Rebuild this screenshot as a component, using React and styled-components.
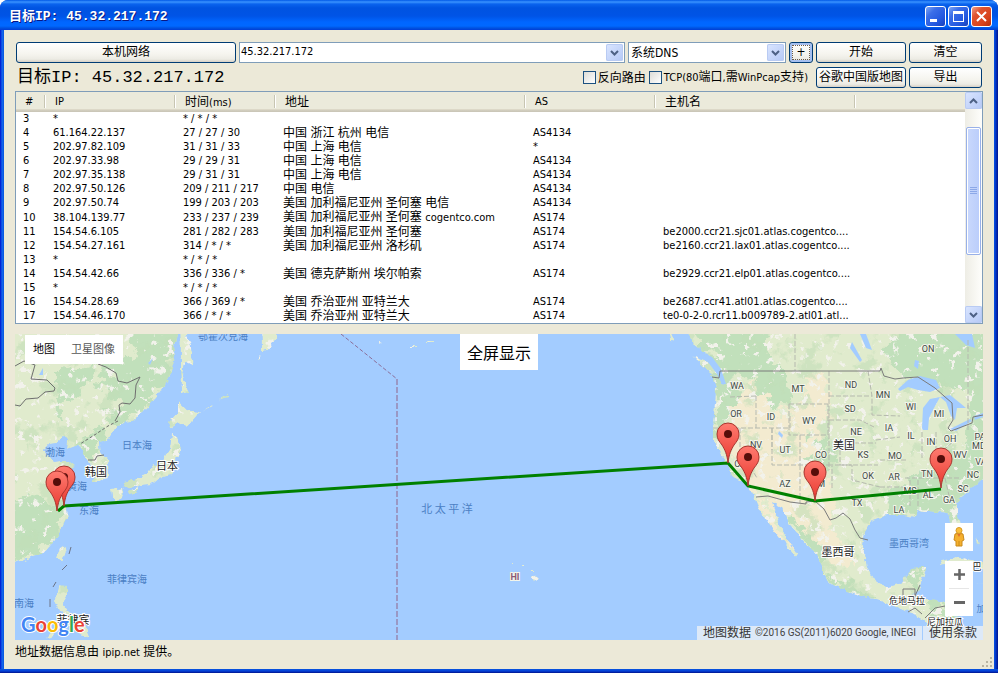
import React from "react";
import styled, { createGlobalStyle } from "styled-components";

const LATIN = '"DejaVu Sans Condensed", "Noto Sans", "Noto Sans CJK SC", sans-serif';
const MONO = '"Liberation Mono", "Noto Sans CJK SC", monospace';

const GlobalStyle = createGlobalStyle`
  * { box-sizing: border-box; }
  body { margin: 0; background: #fff; }
  button, input, select { font: inherit; color: inherit; margin: 0; }
`;

const Window = styled.div`
  display: flex;
  flex-direction: column;
  min-height: 100vh;
  border-radius: 8px 8px 0 0;
  background: linear-gradient(90deg, #0019cf 0, #0831d9 1px, #166aee 2px, #0855dd 4px, #0855dd calc(100% - 4px), #0441d8 calc(100% - 3px), #00138c 100%);
  color: #000;
  font: 11px/14px ${LATIN};
  overflow: hidden;
`;

const TitleBar = styled.header`
  display: flex;
  align-items: center;
  justify-content: space-between;
  height: 30px;
  padding: 3px 6px 0 9px;
  background: linear-gradient(180deg, #0058e6 0, #3a93ff 2px, #0a63ee 4px, #0053e1 8px, #0054e6 16px, #0066ff 22px, #0068ff 26px, #0053e0 28px, #003dd7 30px);
`;

const Title = styled.h1`
  margin: 0;
  color: #fff;
  font: bold 13px/20px ${MONO};
  text-shadow: 1px 1px 0 #0a1883;
  white-space: pre;
`;

const CaptionButtons = styled.div`
  display: flex;
  gap: 2px;
`;

const CaptionButton = styled.button`
  display: flex;
  width: 21px;
  height: 21px;
  padding: 0;
  border: 1px solid #fff;
  border-radius: 3px;
  background: ${(p) =>
    p.$danger
      ? "linear-gradient(135deg, #f0a08a 0, #e0532e 30%, #d8431c 70%, #b32d0a 100%)"
      : "linear-gradient(135deg, #7ea6f4 0, #3b6ee8 30%, #2358e0 70%, #1840b8 100%)"};
`;

const Client = styled.main`
  display: flex;
  flex: 1;
  flex-direction: column;
  margin: 0 4px;
  padding: 12px 11px 0;
  background: #ece9d8;
`;

const Toolbar = styled.form`
  display: grid;
  grid-template-columns: 220px 1fr 158px 24px 90px 73px;
  grid-auto-rows: 21px;
  gap: 4px 3px;
  padding: 0 1px;
`;

const XpButton = styled.button`
  padding: 0;
  border: 1px solid #003c74;
  border-radius: 3px;
  background: linear-gradient(180deg, #fff 0, #f5f4ee 60%, #ecebe4 85%, #d6d0c5 100%);
  box-shadow: ${(p) => (p.$focused ? "inset 0 0 0 2px #a6c0f0" : "none")};
  outline: ${(p) => (p.$focused ? "1px dotted #6b5a4a" : "none")};
  outline-offset: -4px;
  font-size: 12px;
  line-height: 17px;
  white-space: nowrap;
`;

const Combo = styled.div`
  display: grid;
  grid-template-columns: 1fr 17px;
  padding: 1px;
  border: 1px solid #7f9db9;
  background: #fff;
`;

const ComboInput = styled.input`
  min-width: 0;
  padding: 0 0 1px;
  border: 0;
  outline: 0;
  background: transparent;
`;

const ComboSelect = styled.select`
  grid-area: 1 / 1 / 2 / 3;
  padding: 0 0 0 1px;
  border: 0;
  outline: 0;
  background: transparent;
  appearance: none;
  font-size: 12px;
`;

const ArrowFace = styled.span`
  display: flex;
  align-items: center;
  justify-content: center;
  grid-area: 1 / 2;
  border-radius: 2px;
  background: linear-gradient(135deg, #dbe6ff, #b4c8f6);
  box-shadow: inset 0 0 0 1px #b9cbf3;
  pointer-events: none;
`;

const ArrowButton = styled.button`
  display: flex;
  align-items: center;
  justify-content: center;
  padding: 0;
  border: 0;
  border-radius: 2px;
  background: linear-gradient(135deg, #dbe6ff, #b4c8f6);
  box-shadow: inset 0 0 0 1px #b9cbf3;
`;

const Summary = styled.div`
  display: flex;
  grid-column: span 4;
  align-items: center;
  justify-content: space-between;
  padding: 0 5px 0 1px;
`;

const Target = styled.h2`
  margin: 0;
  font: 17px/21px ${MONO};
  white-space: pre;
`;

const Options = styled.div`
  display: flex;
  gap: 3px;
`;

const Option = styled.label`
  display: flex;
  align-items: center;
  gap: 2px;
  font-size: 12px;
  white-space: nowrap;
`;

const Tick = styled.input`
  width: 13px;
  height: 13px;
  border: 1px solid #1c5180;
  background: linear-gradient(135deg, #dcdcd7, #fff);
  appearance: none;
`;

const Small = styled.span`
  font-size: 11px;
`;

const ListBox = styled.section`
  display: grid;
  grid-template-columns: 1fr 17px;
  margin-top: 3px;
  border: 1px solid #7f9db9;
  background: #fff;
`;

const Hops = styled.table`
  width: 100%;
  border-collapse: collapse;
  table-layout: fixed;
`;

const Head = styled.th`
  width: ${(p) => (p.$width ? `${p.$width}px` : "auto")};
  height: 20px;
  padding: 0 0 0 ${(p) => (p.$width ? 9 : 0)}px;
  background:
    linear-gradient(90deg, #c7c5b2 1px, #fff 1px) right 0 top 3px / ${(p) => (p.$width ? 2 : 0)}px 13px no-repeat,
    linear-gradient(180deg, #ebeadb 0, #ebeadb 17px, #e2decd 17px, #d6d2c2 18px, #cbc7b8 19px, #cbc7b8 20px);
  font-size: ${(p) => (p.$cjk ? 12 : 11)}px;
  font-weight: normal;
  text-align: left;
  white-space: nowrap;
`;

const Cell = styled.td`
  height: 14px;
  padding: 0 0 0 7px;
  font-size: ${(p) => (p.$cjk ? 12 : 11)}px;
  line-height: 14px;
  overflow: hidden;
  text-overflow: ellipsis;
  white-space: nowrap;
`;

const Scrollbar = styled.div`
  display: grid;
  grid-template-rows: 17px 1fr 17px;
  background: linear-gradient(90deg, #eeede5, #fefefb);
`;

const ScrollTrack = styled.div`
  display: grid;
  grid-template-rows: 18fr 127fr 51fr;
`;

const ScrollThumb = styled.div`
  display: flex;
  grid-row: 2;
  flex-direction: column;
  align-items: center;
  justify-content: center;
  gap: 1px;
  margin: 0 1px;
  border: 1px solid #98b0e8;
  border-radius: 2px;
  background: linear-gradient(90deg, #c9d8fc, #bacdfb);
  box-shadow: inset 0 0 0 1px #fff;
`;

const Grip = styled.span`
  width: 7px;
  height: 1px;
  background: #8ca8e8;
`;

const MapPanel = styled.section`
  position: relative;
  flex: 1;
  min-height: 306px;
  margin-top: 10px;
  overflow: hidden;
  background: #a3ccff;
`;

const MapSvg = styled.svg`
  position: absolute;
  inset: 0;
  display: block;
  width: 100%;
  height: 100%;
`;

const StateText = styled.text`
  fill: ${(p) => (p.$tint ? "#8a5a78" : "#3f4a45")};
  stroke: #f3f5ea;
  stroke-width: 2px;
  paint-order: stroke;
  font: 9px Roboto, sans-serif;
  font-weight: ${(p) => (p.$tint ? 700 : 400)};
  text-anchor: middle;
`;

const CountryText = styled.text`
  fill: #222;
  stroke: #fff;
  stroke-width: 2px;
  paint-order: stroke;
  font: ${(p) => p.$size || 11}px "Noto Sans CJK SC", sans-serif;
  text-anchor: middle;
`;

const SeaText = styled.text`
  fill: #4b80c4;
  font: ${(p) => p.$size || 10}px "Noto Sans CJK SC", sans-serif;
  text-anchor: middle;
`;

const LogoText = styled.text`
  stroke: #fff;
  stroke-width: 2px;
  paint-order: stroke;
  font: bold 20px Lato, sans-serif;
`;

const MapTypes = styled.div`
  position: absolute;
  top: 1px;
  left: 10px;
  display: flex;
  background: #fff;
`;

const MapType = styled.button`
  height: 29px;
  padding: 0 8px;
  border: 0;
  background: transparent;
  color: ${(p) => (p.$active ? "#000" : "#565656")};
  font-size: 11px;
`;

const FullScreen = styled.button`
  position: absolute;
  top: 0;
  left: 50%;
  width: 78px;
  height: 36px;
  margin-left: -39px;
  padding: 0;
  border: 0;
  background: #fff;
  font: 16px "Noto Sans CJK SC", sans-serif;
`;

const MapControls = styled.div`
  position: absolute;
  right: 10px;
  bottom: 24px;
  display: flex;
  flex-direction: column;
  gap: 10px;
`;

const ControlGroup = styled.div`
  display: flex;
  flex-direction: column;
  align-items: center;
  width: 28px;
  background: #fff;
`;

const ControlButton = styled.button`
  display: flex;
  align-items: center;
  justify-content: center;
  width: 28px;
  height: ${(p) => p.$height}px;
  padding: 0;
  border: 0;
  background: transparent;
`;

const ControlRule = styled.span`
  width: 20px;
  height: 1px;
  background: #e6e6e6;
`;

const Credits = styled.div`
  position: absolute;
  right: 0;
  bottom: 0;
  display: flex;
  gap: 1px;
  color: #444;
  font: 10px/14px Roboto, "Noto Sans CJK SC", sans-serif;
`;

const Credit = styled.span`
  display: flex;
  gap: 4px;
  padding: 0 6px;
  background: rgba(245, 245, 245, 0.7);
  white-space: nowrap;
`;

const CreditLabel = styled.span`
  color: #333;
  font-size: 12px;
`;

const TermsLink = styled.a`
  color: #333;
  font-size: 12px;
  text-decoration: none;
`;

const Footer = styled.footer`
  display: flex;
  justify-content: space-between;
  height: 29px;
  margin-right: -10px;
  padding-top: 5px;
  font-size: 12px;
`;

const SizeGrip = styled.svg`
  align-self: flex-end;
  margin-bottom: 1px;
`;

const BottomEdge = styled.div`
  height: 4px;
  background: linear-gradient(180deg, #0855dd, #0441d8 50%, #00138c);
`;

const hops = [
  ["3", "*", "* / * / *", "", "", "", ""],
  ["4", "61.164.22.137", "27 / 27 / 30", "中国 浙江 杭州 电信", "", "AS4134", ""],
  ["5", "202.97.82.109", "31 / 31 / 33", "中国 上海 电信", "", "*", ""],
  ["6", "202.97.33.98", "29 / 29 / 31", "中国 上海 电信", "", "AS4134", ""],
  ["7", "202.97.35.138", "29 / 31 / 31", "中国 上海 电信", "", "AS4134", ""],
  ["8", "202.97.50.126", "209 / 211 / 217", "中国 电信", "", "AS4134", ""],
  ["9", "202.97.50.74", "199 / 203 / 203", "美国 加利福尼亚州 圣何塞 电信", "", "AS4134", ""],
  ["10", "38.104.139.77", "233 / 237 / 239", "美国 加利福尼亚州 圣何塞 ", "cogentco.com", "AS174", ""],
  ["11", "154.54.6.105", "281 / 282 / 283", "美国 加利福尼亚州 圣何塞", "", "AS174", "be2000.ccr21.sjc01.atlas.cogentco...."],
  ["12", "154.54.27.161", "314 / * / *", "美国 加利福尼亚州 洛杉矶", "", "AS174", "be2160.ccr21.lax01.atlas.cogentco...."],
  ["13", "*", "* / * / *", "", "", "", ""],
  ["14", "154.54.42.66", "336 / 336 / *", "美国 德克萨斯州 埃尔帕索", "", "AS174", "be2929.ccr21.elp01.atlas.cogentco...."],
  ["15", "*", "* / * / *", "", "", "", ""],
  ["16", "154.54.28.69", "366 / 369 / *", "美国 乔治亚州 亚特兰大", "", "AS174", "be2687.ccr41.atl01.atlas.cogentco...."],
  ["17", "154.54.46.170", "366 / * / *", "美国 乔治亚州 亚特兰大", "", "AS174", "te0-0-2-0.rcr11.b009789-2.atl01.atl..."],
];

const states = [
  ["ON", 928, 352], ["WA", 737, 389], ["MT", 798, 392], ["ND", 851, 388], ["MN", 883, 398],
  ["OR", 736, 417], ["ID", 771, 420], ["SD", 850, 412], ["WY", 809, 424], ["WI", 911, 410],
  ["MI", 939, 417], ["NE", 856, 435], ["IA", 889, 431], ["IL", 911, 439], ["IN", 931, 445],
  ["OH", 950, 442], ["PA", 980, 440], ["MD", 979, 449], ["NV", 756, 448], ["UT", 785, 453],
  ["CO", 821, 458], ["KS", 863, 458], ["MO", 895, 459], ["WV", 960, 458], ["VA", 981, 465],
  ["CA", 740, 467], ["AZ", 785, 487], ["NM", 818, 487], ["OK", 868, 479], ["AR", 894, 480],
  ["TN", 927, 477], ["NC", 973, 478], ["MS", 910, 494], ["AL", 928, 498], ["SC", 963, 492],
  ["GA", 949, 503], ["TX", 857, 506], ["LA", 899, 513],
];

const countries = [
  ["韩国", 96, 476, 11], ["日本", 167, 470, 11], ["美国", 844, 449, 11], ["墨西哥", 838, 556, 11],
  ["危地马拉", 907, 604, 9], ["尼加拉瓜", 945, 625, 9], ["菲律宾", 73, 624, 11], ["巴", 977, 570, 9],
];

const seas = [
  ["日本海", 137, 449, 10], ["渤海", 55, 456, 10], ["黄海", 77, 490, 10], ["东海", 89, 514, 10],
  ["菲律宾海", 127, 583, 10], ["南海", 24, 607, 10], ["鄂霍次克海", 223, 340, 10],
  ["北 太 平 洋", 447, 513, 11], ["墨西哥湾", 909, 547, 10], ["加勒比", 990, 612, 9],
];

const pins = [[64, 506], [57, 511], [728, 463], [748, 486], [815, 501], [941, 488]];

const LAND = [
  "M5 324H177V334L173 347 175 357 170 375 160 392 147 408 133 422 125 423 117 425 107 440 99 442 100 452 108 460 109 475 100 482 93 482 94 468 87 460 83 453 79 445 67 450 68 438 63 437 58 442 50 443 43 450 50 458 53 463 60 462 70 462 75 466 66 470 60 478 63 490 65 502 66 507 67 518 60 532 50 545 42 555 30 558 15 563H5Z",
  "M180 324H187V334L190 347 193 366 185 362 183 378 189 392 182 394 181 368Z",
  "M178 401L187 410 200 412 193 420 187 427 177 422 172 430 169 423 178 413Z",
  "M172 433L177 437 182 448 177 458 175 468 172 475 160 478 153 484 143 485 133 487 123 488 125 483 140 477 147 474 153 465 158 466 166 455 170 446Z",
  "M112 490L122 488 124 495 117 502 113 498ZM127 491L138 488 135 494 128 495Z",
  "M64 544L66 552 62 563 57 556 60 547Z",
  "M58 585L68 586 68 595 63 603 67 610 74 616 70 618 60 610 55 600ZM72 622L80 618 86 628 90 638 80 634 74 630ZM46 638L58 625 59 627 49 640Z",
  "M262 324H277V334L275 340 268 350 263 352ZM256 361L260 356 261 358 258 361Z",
  "M202 412L212 405 213 406ZM217 401L228 395 228 397Z",
  "M687 324V334L692 343 702 350 707 354 712 362 720 370 725 385 722 384 719 376 712 375 716 388 713 428 713 438 720 453 728 465 733 477 743 482 752 492 757 505 768 522 780 538 790 550 796 558 798 555 790 542 780 527 775 512 772 503 782 508 790 525 807 545 815 552 822 567 822 575 833 585 863 597 880 600 897 607 910 613 923 620 933 628 940 650H962L958 625 952 606 937 600 917 598 913 594 920 588 927 567 910 568 903 583 887 587 877 583 867 567 863 548 865 532 873 520 887 515 903 515 915 517 917 510 937 512 947 513 952 527 958 538 962 532 957 512 957 502 965 495 983 477 993 470V324Z",
  "M692 356L707 362 718 374 716 377 707 370 697 361Z",
  "M668 324L672 334 675 341 671 340Z",
  "M940 561L957 557 973 560 993 566V570L965 564 957 563 941 566ZM976 583L993 582V587ZM977 535L979 545 976 541Z",
  "M534 574L537 577 539 579 534 582 532 577ZM531 570h2v1h-2zM521 566h2v1h-2zM513 563h1v1h-1z",
  "M408 346h9v1h-9zM427 342h8v1h-8zM380 343l3 1-3 1z",
].join("");

const WOODS = [
  "M125 324L172 324 173 347 170 372 150 405 120 423 108 420 118 405 110 395 95 388 98 374 122 365 138 352Z",
  "M60 370L95 360 86 380 72 402 55 420 58 395Z",
  "M5 510L30 490 50 500 67 510 60 530 42 553 5 560Z",
  "M77 440L100 425 107 438 98 444 100 454 90 462Z",
  "M690 324H762L775 365 792 378 788 405 772 412 760 395 750 378 742 374 736 388 731 400 728 425 724 450 716 440 713 428 716 388 712 375 720 372Z",
  "M812 436L826 434 832 455 826 470 815 464Z",
  "M900 324H993V477L958 505 960 534 950 520 945 512 878 518 888 496 905 486 925 470 945 460 965 445 972 405 958 388 910 380 890 366 888 345Z",
  "M796 513L812 530 824 555 822 572 808 545 792 525Z",
  "M905 570L926 568 918 590 903 584ZM924 602L945 602 958 625 935 618Z",
  "M822 575L860 588 882 598 860 597 832 585Z",
];

const TAN = [
  "M732 392L755 385 778 417 800 405 810 375 822 378 832 400 825 425 812 432 814 465 830 472 836 505 826 530 850 548 858 566 842 568 805 530 780 505 755 494 742 478 730 452 734 428 728 415Z",
  "M756 500L773 508 797 556 788 552 768 522Z",
];

const LAKES =
  "M898 389L908 380 920 376 936 380 940 388 930 392 918 390 908 387 900 391ZM922 428L923 408 930 399 940 397 934 408 929 418 928 430 923 430ZM940 397L950 395 960 403 966 408 957 408 955 420 951 416 946 402ZM950 429L970 419 972 421 956 431ZM974 416L983 413V417L975 420ZM860 334L866 334 872 350 866 348ZM852 342L862 360 860 362 850 348ZM955 334H972L975 348 966 345ZM915 360L919 361 918 369 914 366ZM702 352L712 357 721 369 726 384 722 384 717 374 708 362ZM779 431L783 435 782 438 778 434ZM148 363L153 358 150 365ZM39 375L43 368 43 375Z";

const BORDERS =
  "M720 371H880L881 368 884 376 895 379 903 378 918 377 935 388 944 396 952 403 953 420 948 428 951 431 972 423 973 417 983 415M712 377L719 378 720 371M756 497L768 496 790 502 806 504V502L815 501 824 509 830 520 836 518 843 513 850 519 855 530 860 538 868 540M903 596V589H915V600M915 596L920 585M925 618L935 608 945 606M908 612L915 608 922 614";

const ASIA_BORDERS =
  "M15 405L20 406 26 399 38 398 45 392 54 391 55 388 47 380 31 379 35 365 24 361 15 366M98 364L106 367 116 373 118 381 127 383 140 377 136 385 135 398 130 404 122 403 119 405 120 412 115 421M88 460L95 460 97 456 104 455";

const STATE_LINES =
  "M713 428H790V416M756 396V428M772 428V450M789 404H828M789 404V435H828V404M800 435V465M772 428V465H828M800 465V503M829 371V470M829 396H872M829 420H860L874 427M840 443H876M840 443V465H878M828 465H852V480L880 487M868 371L872 396 872 415 900 416M876 440L900 437M880 460H906M880 487H905M795 334V371M910 480V508M918 480V508M905 478H960M922 432V460M936 432V455M945 478L950 500M938 455L955 440M968 430V405M968 408V340M832 488V466M730 397L756 396M740 428V450L757 478";

function Chevron({ up }) {
  return (
    <svg width="9" height="6" viewBox="0 0 9 6" aria-hidden="true">
      <path d={up ? "M1 5L4.500 1.500 8 5" : "M1 1L4.500 4.500 8 1"} fill="none" stroke="#4d6185" strokeWidth="2" />
    </svg>
  );
}

function Pin({ x, y }) {
  return (
    <g transform={`translate(${x} ${y})`}>
      <path
        d="M0 0C-1 -9 -3 -13 -6 -18C-9 -22 -11 -24 -11 -29A11 11 0 0 1 11 -29C11 -24 9 -22 6 -18C3 -13 1 -9 0 0Z"
        fill="url(#pinFill)"
        stroke="#a8352f"
        strokeWidth="1"
      />
      <circle cx="0" cy="-29" r="4" fill="#560d0a" />
    </g>
  );
}

function RouteMap() {
  return (
    <MapSvg viewBox="15 334 968 306" preserveAspectRatio="xMidYMid slice" role="img" aria-label="路由地图">
      <defs>
        <linearGradient id="pinFill" x1="0" y1="0" x2="0" y2="1">
          <stop offset="0" stopColor="#ff7b70" />
          <stop offset="1" stopColor="#e8382f" />
        </linearGradient>
        <clipPath id="landClip"><path d={LAND} /></clipPath>
        <filter id="forest" x="0" y="0" width="1" height="1" colorInterpolationFilters="sRGB">
          <feTurbulence type="fractalNoise" baseFrequency="0.05" numOctaves="4" seed="7" />
          <feColorMatrix values="0 0 0 0 0.76  0 0 0 0 0.87  0 0 0 0 0.72  10 0 0 0 -5.800" />
        </filter>
        <filter id="peaks" x="0" y="0" width="1" height="1" colorInterpolationFilters="sRGB">
          <feTurbulence type="fractalNoise" baseFrequency="0.12" numOctaves="3" seed="21" />
          <feColorMatrix values="0 0 0 0 0.95  0 0 0 0 0.95  0 0 0 0 0.92  0 14 0 0 -8.800" />
        </filter>
        <filter id="coast" filterUnits="userSpaceOnUse" x="5" y="324" width="988" height="326">
          <feTurbulence type="fractalNoise" baseFrequency="0.15" numOctaves="2" seed="3" />
          <feDisplacementMap in="SourceGraphic" scale="6" xChannelSelector="R" yChannelSelector="G" />
        </filter>
        <filter id="patches" filterUnits="userSpaceOnUse" x="5" y="324" width="988" height="326">
          <feTurbulence type="fractalNoise" baseFrequency="0.07" numOctaves="3" seed="11" />
          <feDisplacementMap in="SourceGraphic" scale="30" xChannelSelector="R" yChannelSelector="G" />
        </filter>
      </defs>
      <rect x="15" y="334" width="968" height="306" fill="#a3ccff" />
      <g filter="url(#coast)">
        <g clipPath="url(#landClip)">
          <path d={LAND} fill="#e0ebcd" />
          <g filter="url(#patches)">
            {WOODS.map((d) => <path key={d} d={d} fill="#c1e0bb" />)}
            {TAN.map((d) => <path key={d} d={d} fill="#f3ebd0" />)}
          </g>
          <rect x="5" y="324" width="988" height="326" filter="url(#forest)" opacity="0.6" />
          <rect x="5" y="324" width="988" height="326" filter="url(#peaks)" />
        </g>
      </g>
      <path d={LAKES} fill="#a3ccff" />
      <path d={STATE_LINES} fill="none" stroke="#b5b9ae" strokeDasharray="5 2" />
      <path d={BORDERS} fill="none" stroke="#7b7b7b" strokeWidth="1" />
      <path d={ASIA_BORDERS} fill="none" stroke="#6f6f6f" strokeWidth="1" />
      <path d="M118 421L108 426 96 434 80 444" fill="none" stroke="#6f6f6f" strokeDasharray="3 2" />
      <path d="M71 547L69 554M67 565L62 570M56 582L53 587M50 599V607" stroke="#6c7488" strokeWidth="1" />
      <path d="M341 334L397 379" stroke="#8b6f9a" strokeDasharray="4 2" />
      <path d="M397 379V640" stroke="#9a98c4" strokeWidth="2" strokeDasharray="6 2" />
      {seas.map(([t, x, y, s]) => <SeaText key={t} x={x} y={y} $size={s}>{t}</SeaText>)}
      {states.map(([t, x, y]) => <StateText key={t} x={x} y={y}>{t}</StateText>)}
      {countries.map(([t, x, y, s]) => <CountryText key={t} x={x} y={y} $size={s}>{t}</CountryText>)}
      <rect x="510" y="573" width="10" height="8" fill="#dce6f6" />
      <StateText x="515" y="580" $tint>HI</StateText>
      <polyline points="58,511 64,506 728,463 748,486 815,501 941,489" fill="none" stroke="#008000" strokeWidth="3" />
      {pins.map(([x, y]) => <Pin key={x} x={x} y={y} />)}
      <LogoText x="21" y="632">
        <tspan fill="#4285f4">G</tspan>
        <tspan fill="#ea4335">o</tspan>
        <tspan fill="#fbbc05">o</tspan>
        <tspan fill="#4285f4">g</tspan>
        <tspan fill="#34a853">l</tspan>
        <tspan fill="#ea4335">e</tspan>
      </LogoText>
    </MapSvg>
  );
}

export default function App() {
  return (
    <>
      <GlobalStyle />
      <Window>
        <TitleBar>
          <Title>目标IP: 45.32.217.172</Title>
          <CaptionButtons>
            <CaptionButton aria-label="最小化">
              <svg width="19" height="19" aria-hidden="true"><rect x="4" y="12" width="7" height="3" fill="#fff" /></svg>
            </CaptionButton>
            <CaptionButton aria-label="最大化">
              <svg width="19" height="19" aria-hidden="true">
                <path d="M4 4H15V15H4ZM5 7V14H14V7Z" fill="#fff" fillRule="evenodd" />
              </svg>
            </CaptionButton>
            <CaptionButton aria-label="关闭" $danger>
              <svg width="19" height="19" aria-hidden="true"><path d="M5 5L14 14M14 5L5 14" stroke="#fff" strokeWidth="2" /></svg>
            </CaptionButton>
          </CaptionButtons>
        </TitleBar>
        <Client>
          <Toolbar onSubmit={(e) => e.preventDefault()}>
            <XpButton type="button">本机网络</XpButton>
            <Combo>
              <ComboInput aria-label="目标IP" defaultValue="45.32.217.172" />
              <ArrowButton type="button" aria-label="历史记录"><Chevron /></ArrowButton>
            </Combo>
            <Combo>
              <ComboSelect aria-label="DNS"><option>系统DNS</option></ComboSelect>
              <ArrowFace><Chevron /></ArrowFace>
            </Combo>
            <XpButton type="button" $focused>+</XpButton>
            <XpButton type="submit">开始</XpButton>
            <XpButton type="button">清空</XpButton>
            <Summary>
              <Target>目标IP: 45.32.217.172</Target>
              <Options>
                <Option><Tick type="checkbox" />反向路由</Option>
                <Option><Tick type="checkbox" /><span><Small>TCP(80</Small>端口<Small>,</Small>需<Small>WinPcap</Small>支持<Small>)</Small></span></Option>
              </Options>
            </Summary>
            <XpButton type="button">谷歌中国版地图</XpButton>
            <XpButton type="button">导出</XpButton>
          </Toolbar>
          <ListBox>
            <Hops>
              <thead>
                <tr>
                  <Head $width={30}>#</Head>
                  <Head $width={130}>IP</Head>
                  <Head $width={100} $cjk>时间<Small>(ms)</Small></Head>
                  <Head $width={250} $cjk>地址</Head>
                  <Head $width={130}>AS</Head>
                  <Head $width={200} $cjk>主机名</Head>
                  <Head aria-hidden="true" />
                </tr>
              </thead>
              <tbody>
                {hops.map(([n, ip, time, place, carrier, as, host]) => (
                  <tr key={n}>
                    <Cell>{n}</Cell>
                    <Cell>{ip}</Cell>
                    <Cell>{time}</Cell>
                    <Cell $cjk>{place}{carrier && <Small>{carrier}</Small>}</Cell>
                    <Cell>{as}</Cell>
                    <Cell>{host}</Cell>
                    <Cell />
                  </tr>
                ))}
              </tbody>
            </Hops>
            <Scrollbar>
              <ArrowButton type="button" aria-label="向上滚动"><Chevron up /></ArrowButton>
              <ScrollTrack>
                <ScrollThumb><Grip /><Grip /><Grip /><Grip /></ScrollThumb>
              </ScrollTrack>
              <ArrowButton type="button" aria-label="向下滚动"><Chevron /></ArrowButton>
            </Scrollbar>
          </ListBox>
          <MapPanel>
            <RouteMap />
            <MapTypes>
              <MapType type="button" $active>地图</MapType>
              <MapType type="button">卫星图像</MapType>
            </MapTypes>
            <FullScreen type="button">全屏显示</FullScreen>
            <MapControls>
              <ControlGroup>
                <ControlButton type="button" aria-label="街景" $height={28}>
                  <svg width="12" height="20" viewBox="0 0 12 20" aria-hidden="true">
                    <path d="M2 7Q6 5 10 7L11 13 9 14V19H3V14L1 13Z" fill="#f5b02e" stroke="#c98a1b" />
                    <path d="M4 6.500L6 10 8 6.500Z" fill="#e0702a" />
                    <path d="M6 14V19" stroke="#c98a1b" />
                    <circle cx="6" cy="3.500" r="3" fill="#fbbf3b" stroke="#d79a24" />
                  </svg>
                </ControlButton>
              </ControlGroup>
              <ControlGroup>
                <ControlButton type="button" aria-label="放大" $height={27}>
                  <svg width="11" height="11" aria-hidden="true"><path d="M0 5.500H11M5.500 0V11" stroke="#666" strokeWidth="2.500" /></svg>
                </ControlButton>
                <ControlRule />
                <ControlButton type="button" aria-label="缩小" $height={27}>
                  <svg width="11" height="11" aria-hidden="true"><path d="M0 5.500H11" stroke="#666" strokeWidth="3" /></svg>
                </ControlButton>
              </ControlGroup>
            </MapControls>
            <Credits>
              <Credit>
                <CreditLabel>地图数据</CreditLabel>
                <span>©2016 GS(2011)6020 Google, INEGI</span>
              </Credit>
              <Credit><TermsLink href="#terms">使用条款</TermsLink></Credit>
            </Credits>
          </MapPanel>
          <Footer>
            <span>地址数据信息由 <Small>ipip.net</Small> 提供。</span>
            <SizeGrip width="12" height="12" aria-hidden="true">
              <path d="M9 1h2v2h-2zM9 5h2v2h-2zM9 9h2v2h-2zM5 5h2v2h-2zM5 9h2v2h-2zM1 9h2v2h-2z" fill="#b8b4a2" />
            </SizeGrip>
          </Footer>
        </Client>
        <BottomEdge />
      </Window>
    </>
  );
}
